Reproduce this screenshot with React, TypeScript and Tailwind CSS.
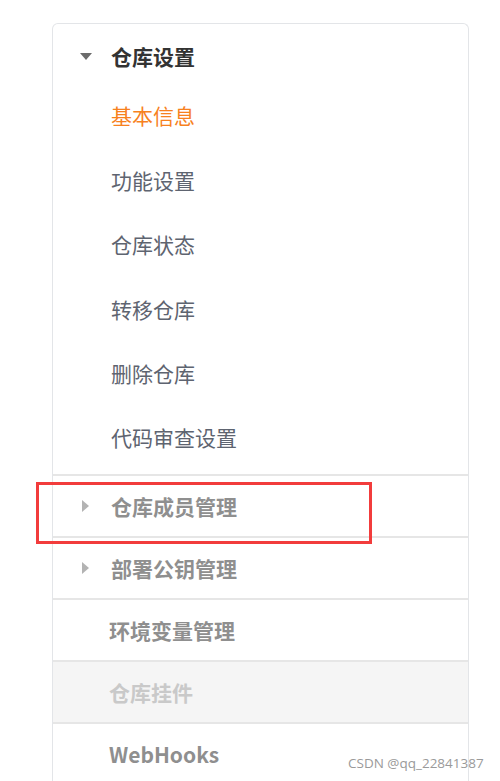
import React from "react";

const font = { fontFamily: '"Noto Sans CJK SC", "Open Sans", sans-serif' };

const subItems = ["基本信息", "功能设置", "仓库状态", "转移仓库", "删除仓库", "代码审查设置"];

const CaretDown = () => (
  <svg width="12" height="8" viewBox="0 0 12 8" className="shrink-0">
    <path d="M0 0h12L6 7z" fill="#6b6b6b" />
  </svg>
);

const CaretRight = () => (
  <svg width="7" height="12" viewBox="0 0 7 12" className="shrink-0">
    <path d="M0 0v12l7-6z" fill="#b3b3b3" />
  </svg>
);

export default function App() {
  return (
    <div className="relative h-[781px] w-[500px] overflow-hidden bg-white" style={font}>
      <div className="ml-[52px] mt-[23px] h-[800px] w-[417px] rounded-t-[6px] border border-b-0 border-[#e3e5e8]">
        {/* 仓库设置 */}
        <div className="pt-[13px] pb-[4px]">
          <div className="flex h-[40px] items-center pl-[27px]">
            <CaretDown />
            <span className="ml-[19px] text-[21px] font-bold text-[#333]">仓库设置</span>
          </div>
          <div className="mt-[7px]">
            {subItems.map((item, i) => (
              <div
                key={item}
                className={`flex h-[64.4px] items-center pl-[58px] text-[21px] ${
                  i === 0 ? "text-[#f7811e]" : "text-[#5e6470]"
                }`}
              >
                {item}
              </div>
            ))}
          </div>
        </div>

        <div className="flex h-[62px] items-center border-t-2 border-[#e6e6e6] pl-[29px]">
          <CaretRight />
          <span className="ml-[22px] text-[21px] font-bold text-[#8f8f8f]">仓库成员管理</span>
        </div>
        <div className="flex h-[62px] items-center border-t-2 border-[#e6e6e6] pl-[29px]">
          <CaretRight />
          <span className="ml-[22px] text-[21px] font-bold text-[#8f8f8f]">部署公钥管理</span>
        </div>
        <div className="flex h-[62px] items-center border-t-2 border-[#e6e6e6] pl-[56px]">
          <span className="text-[21px] font-bold text-[#8f8f8f]">环境变量管理</span>
        </div>
        <div className="flex h-[62px] items-center border-t-2 border-[#e6e6e6] bg-[#f5f5f5] pl-[56px]">
          <span className="text-[21px] font-bold text-[#c9c9c9]">仓库挂件</span>
        </div>
        <div className="flex h-[62px] items-center border-t-2 border-[#e6e6e6] pl-[56px]">
          <span className="text-[21px] font-bold text-[#8f8f8f]">WebHooks</span>
        </div>
      </div>

      {/* annotation box */}
      <div className="absolute left-[36px] top-[482px] h-[62px] w-[336px] border-[3px] border-[#f23c3c]" />

      {/* watermark */}
      <div
        className="absolute left-[348px] top-[753px] text-[13.5px] text-[#9a9a9a]"
        style={{ fontFamily: '"Open Sans", "Noto Sans", sans-serif' }}
      >
        CSDN @qq_22841387
      </div>
    </div>
  );
}
